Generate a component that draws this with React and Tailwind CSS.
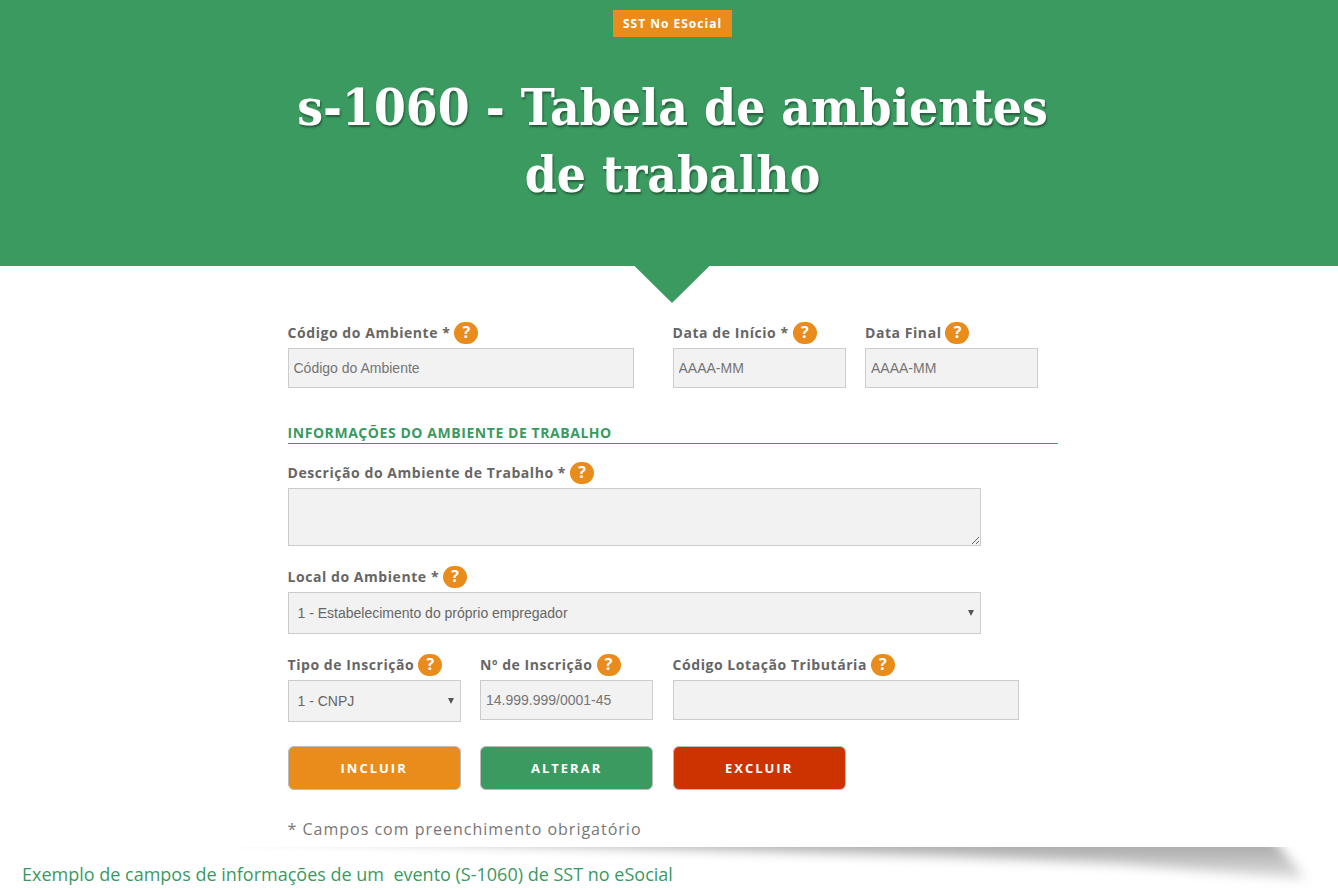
import { useState } from "react";

const inputClass =
  "block w-[90%] h-10 border border-[#ccc] bg-[#f2f2f2] px-[5px] font-['Liberation_Sans',sans-serif] text-sm text-[#666] placeholder:text-[#757575] placeholder:opacity-100";

const buttonClass =
  "h-11 w-[90%] rounded-md border border-[#bbb] pt-0.5 text-[13px] font-bold tracking-[2px] text-white";

function Field({ id, label, className = "", children }) {
  return (
    <div className={className}>
      <div className="mb-1 flex h-[22px] items-center gap-1">
        <label htmlFor={id} className="whitespace-nowrap text-sm font-bold tracking-[0.04em] text-[#666]">
          {label}
        </label>
        <button
          type="button"
          aria-label={"Ajuda: " + label}
          className="flex h-[22px] w-6 shrink-0 items-center justify-center rounded-full bg-[#e98c1b] pb-0.5 text-base font-bold leading-none text-white"
        >
          ?
        </button>
      </div>
      {children}
    </div>
  );
}

function Select({ id, options }) {
  return (
    <div className="relative w-[90%]">
      <select
        id={id}
        className="block h-[42px] w-full appearance-none border border-[#ccc] bg-[#f2f2f2] pl-[9px] pr-6 font-['Liberation_Sans',sans-serif] text-sm text-[#666]"
      >
        {options.map((option) => (
          <option key={option}>{option}</option>
        ))}
      </select>
      <svg
        viewBox="0 0 6 6"
        className="pointer-events-none absolute right-[7px] top-[18px] h-1.5 w-1.5 fill-[#555]"
        aria-hidden="true"
      >
        <path d="M0 0h6L3 6z" />
      </svg>
    </div>
  );
}

// Sombra inclinada abaixo do formulário
function PageShadow() {
  return (
    <svg
      viewBox="0 0 1338 43"
      preserveAspectRatio="none"
      className="pointer-events-none absolute inset-x-0 top-0 h-[43px] w-full"
      aria-hidden="true"
    >
      <defs>
        <linearGradient id="shade" x1="0" y1="0" x2="0" y2="36" gradientUnits="userSpaceOnUse">
          <stop offset="0" stopOpacity="0.32" />
          <stop offset="1" stopOpacity="0.1" />
        </linearGradient>
        <filter id="soft" x="0" y="-60" width="1400" height="140" filterUnits="userSpaceOnUse">
          <feGaussianBlur stdDeviation="6" />
        </filter>
      </defs>
      <path d="M230 -10L400 -5L700 2L940 9L1120 17L1306 32L1278 -2L1262 -40L230 -40z" fill="url(#shade)" filter="url(#soft)" />
    </svg>
  );
}

export default function App() {
  const [descricao, setDescricao] = useState("");

  return (
    <div className="bg-white font-['Open_Sans',sans-serif]">
      {/* Cabeçalho */}
      <header className="relative bg-[#3a9a5f] pb-[58px] pl-[7px] pt-2.5 text-center">
        <a
          href="#sst"
          className="mx-auto block h-[27px] w-fit bg-[#e98c1b] px-2.5 text-xs font-bold leading-[27px] tracking-[1px] text-white"
        >
          SST No ESocial
        </a>
        <h1 className="mx-auto mt-[37px] max-w-[770px] font-['DejaVu_Serif_Condensed','DejaVu_Serif',serif] text-[51px] font-bold leading-[67px] text-white [text-shadow:1px_2px_2px_rgba(0,0,0,0.4)]">
          s-1060 - Tabela de ambientes de trabalho
        </h1>
        <div className="absolute left-1/2 top-full ml-[3px] h-[37px] w-[75px] -translate-x-1/2 bg-[#3a9a5f] [clip-path:polygon(0_0,100%_0,50%_100%)]" />
      </header>

      {/* Formulário */}
      <main className="pl-[7px] pt-14">
        <form className="mx-auto max-w-[770px]" onSubmit={(e) => e.preventDefault()}>
          <div className="grid grid-cols-4">
            <Field id="codigo" label="Código do Ambiente *" className="col-span-2">
              <input id="codigo" type="text" placeholder="Código do Ambiente" className={inputClass} />
            </Field>
            <Field id="inicio" label="Data de Início *">
              <input id="inicio" type="text" placeholder="AAAA-MM" className={inputClass} />
            </Field>
            <Field id="final" label="Data Final">
              <input id="final" type="text" placeholder="AAAA-MM" className={inputClass} />
            </Field>
          </div>

          <h2 className="mt-[35px] border-b border-[#3f9070] pb-px text-sm font-bold leading-[19px] tracking-[0.04em] text-[#3a9a5f]">
            INFORMAÇÕES DO AMBIENTE DE TRABALHO
          </h2>

          <Field id="descricao" label="Descrição do Ambiente de Trabalho *" className="mt-[18px]">
            <textarea
              id="descricao"
              value={descricao}
              onChange={(e) => setDescricao(e.target.value)}
              className="block h-[58px] w-[90%] resize border border-[#ccc] bg-[#f2f2f2] p-[5px] font-['Liberation_Sans',sans-serif] text-sm text-[#666]"
            />
          </Field>

          <Field id="local" label="Local do Ambiente *" className="mt-5">
            <Select id="local" options={["1 - Estabelecimento do próprio empregador", "2 - Estabelecimento de terceiros"]} />
          </Field>

          <div className="mt-5 grid grid-cols-4">
            <Field id="tipo" label="Tipo de Inscrição">
              <Select id="tipo" options={["1 - CNPJ", "2 - CPF"]} />
            </Field>
            <Field id="numero" label="Nº de Inscrição">
              <input id="numero" type="text" placeholder="14.999.999/0001-45" className={inputClass} />
            </Field>
            <Field id="lotacao" label="Código Lotação Tributária" className="col-span-2">
              <input id="lotacao" type="text" className={inputClass} />
            </Field>
          </div>

          <div className="mt-6 grid grid-cols-4">
            <button type="submit" className={buttonClass + " bg-[#e98c1b]"}>INCLUIR</button>
            <button type="button" className={buttonClass + " bg-[#3a9a5f]"}>ALTERAR</button>
            <button type="button" className={buttonClass + " bg-[#cc3300]"}>EXCLUIR</button>
          </div>

          <p className="mt-[27px] pb-1.5 text-base leading-6 tracking-[1px] text-[#777]">
            * Campos com preenchimento obrigatório
          </p>
        </form>
      </main>

      {/* Legenda */}
      <footer className="relative pl-[22px] pt-[13px]">
        <PageShadow />
        <p className="relative whitespace-pre text-lg leading-7 text-[#3a9a5f]">
          {"Exemplo de campos de informações de um  evento (S-1060) de SST no eSocial"}
        </p>
      </footer>
    </div>
  );
}
